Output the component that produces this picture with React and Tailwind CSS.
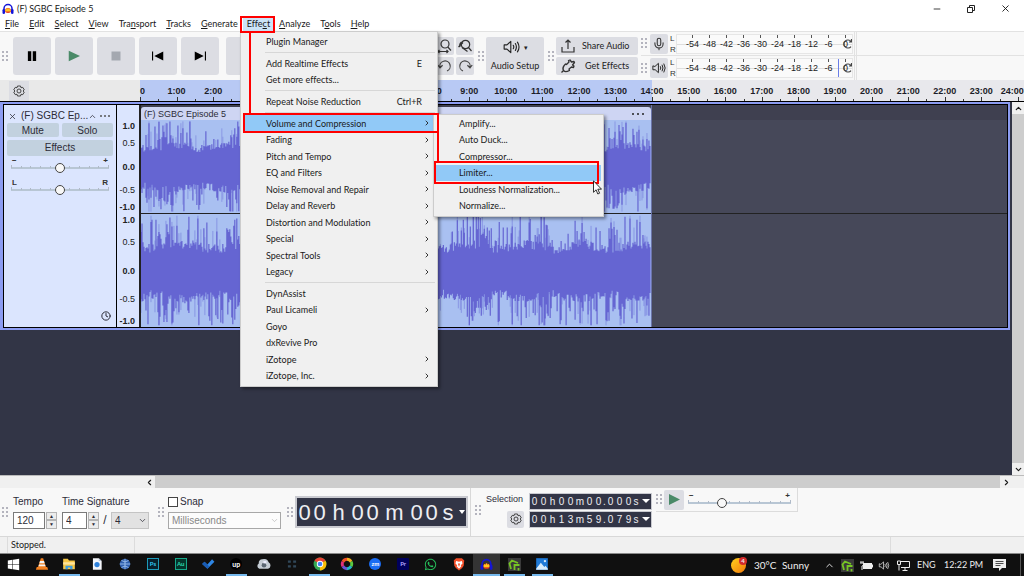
import React from 'react'
import clsx from 'clsx'
import { FaWhatsapp, FaWindows } from 'react-icons/fa'
import { ChevronDown, ChevronLeft, ChevronRight, ChevronUp, Clock, Mic, Minus, X } from 'lucide-react'

const menuItems = [
  ['', 'F', 'ile'],
  ['', 'E', 'dit'],
  ['', 'S', 'elect'],
  ['', 'V', 'iew'],
  ['Tra', 'n', 'sport'],
  ['', 'T', 'racks'],
  ['', 'G', 'enerate'],
  ['Effe', 'c', 't'],
  ['', 'A', 'nalyze'],
  ['T', 'o', 'ols'],
  ['', 'H', 'elp']
]

const effectGroups = [
  { size: 'h-[17px]', items: [{ label: 'Plugin Manager' }] },
  { size: 'h-[33px]', items: [{ label: 'Add Realtime Effects', keys: 'E' }, { label: 'Get more effects...' }] },
  { size: 'h-[17px]', items: [{ label: 'Repeat Noise Reduction', keys: 'Ctrl+R' }] },
  {
    size: 'h-[165px]',
    items: [
      { label: 'Volume and Compression', sub: true, active: true },
      { label: 'Fading', sub: true },
      { label: 'Pitch and Tempo', sub: true },
      { label: 'EQ and Filters', sub: true },
      { label: 'Noise Removal and Repair', sub: true },
      { label: 'Delay and Reverb', sub: true },
      { label: 'Distortion and Modulation', sub: true },
      { label: 'Special', sub: true },
      { label: 'Spectral Tools', sub: true },
      { label: 'Legacy', sub: true }
    ]
  },
  {
    size: 'h-[99px]',
    items: [
      { label: 'DynAssist' },
      { label: 'Paul Licameli', sub: true },
      { label: 'Goyo' },
      { label: 'dxRevive Pro' },
      { label: 'iZotope', sub: true },
      { label: 'iZotope, Inc.', sub: true }
    ]
  }
]

const volumeItems = ['Amplify...', 'Auto Duck...', 'Compressor...', 'Limiter...', 'Loudness Normalization...', 'Normalize...']

const meterMarks = ['-54', '-48', '-42', '-36', '-30', '-24', '-18', '-12', '-6', '0']

const Grip = () => (
  <svg className="h-[11px] w-[6px] shrink-0" viewBox="0 0 6 11" fill="#b4b4be">
    {[0, 4, 8].map((y) => (
      <g key={y}>
        <rect x="0" y={y} width="2" height="2" />
        <rect x="4" y={y} width="2" height="2" />
      </g>
    ))}
  </svg>
)

const AudacityLogo = ({ className }) => (
  <svg className={className} viewBox="0 0 24 24">
    <path d="M4 15V11a8 8 0 0 1 16 0v4" fill="none" stroke="#1414d8" strokeWidth="3" />
    <ellipse cx="12" cy="15" rx="6" ry="5" fill="#e8381c" />
    <path d="M6 15l2-4 2 2 2-4 2 4 2-2 2 4-2 2H8z" fill="#ffc81e" />
    <rect x="1" y="12" width="5" height="10" rx="2.500" fill="#1414d8" />
    <rect x="18" y="12" width="5" height="10" rx="2.500" fill="#1414d8" />
  </svg>
)

const GearIcon = () => (
  <svg className="size-3" viewBox="0 0 24 24" fill="none" stroke="#333" strokeWidth="1.800" strokeLinejoin="round">
    <path d="M9 2h6l1 3.500 3.500-.8 3 5L20 12l2.500 2.300-3 5-3.500-.8-1 3.500H9l-1-3.500-3.500.8-3-5L4 12 1.500 9.700l3-5 3.500.8z" />
    <circle cx="12" cy="12" r="4" />
  </svg>
)

const SpeakerIcon = ({ className }) => (
  <svg className={className} viewBox="0 0 24 20" fill="none" stroke="currentColor" strokeWidth="1.600" strokeLinejoin="round" strokeLinecap="round">
    <path d="M1.500 7v6h4l5.500 5V2L5.500 7z" />
    <path d="M14.500 7.500q1.500 2.500 0 5M17.500 5q3 5 0 10M20.500 3q4.500 7 0 14" />
  </svg>
)

const SearchGlyph = ({ variant }) => (
  <svg className="size-4" viewBox="0 0 16 16" fill="none" stroke="#333" strokeWidth="1.200">
    {variant === 'fit'
      ? (
      <>
        <circle cx="8" cy="6" r="4" />
        <path d="M10.800 9L14 12.500M1 13.500h10M2.500 12L1 13.500 2.500 15M9.500 12l1.500 1.500L9.500 15" />
      </>
        )
      : (
      <>
        <circle cx="8.500" cy="6.500" r="4.200" />
        <path d="M11.500 9.500l3 3.500M1.500 9L6 4.500M5 9.500L10.500 13.500M4.500 4A4.500 4.500 0 0 0 3 9" />
      </>
        )}
  </svg>
)

const ArrowGlyph = ({ flip }) => (
  <svg className={clsx('size-4', flip && '-scale-x-100')} viewBox="0 0 16 16" fill="none" stroke="#444" strokeWidth="1.200">
    <path d="M3 9.500A5.200 5.200 0 1 1 10 13M.8 7L3 9.800 5.600 7.300" />
  </svg>
)

const transport = [
  { name: 'Pause', icon: <path d="M6.500 5.500H11v13H6.500zM13 5.500h4.500v13H13z" fill="#000" /> },
  { name: 'Play', icon: <path d="M5 5l15 7-15 7z" fill="#4a8a68" /> },
  { name: 'Stop', icon: <path d="M6 6h12v12H6z" fill="#a4a8b0" /> },
  { name: 'Skip to start', icon: <path d="M4 6h1.500v12H4zM19 6v12L7 12z" fill="#000" /> },
  { name: 'Skip to end', icon: <path d="M18.500 6H20v12h-1.500zM5 6v12l12-6z" fill="#000" /> }
]

const IconButton = ({ label, children }) => (
  <button aria-label={label} className="flex size-[18px] items-center justify-center rounded-[2px] bg-[#dcdde3]">
    {children}
  </button>
)

const Meter = ({ label, playback, children }) => (
  <div className="flex h-6 items-center">
    <Grip />
    <button aria-label={label} className="ml-[3px] flex h-5 w-[18px] items-center justify-center rounded-[2px] bg-[#dcdde3]">
      {children}
    </button>
    <div className="ml-[2px] flex w-[6px] flex-col font-['Liberation_Sans',sans-serif] text-[8px] leading-[11px] text-[#333]">
      <span>L</span>
      <span>R</span>
    </div>
    <div className="relative flex h-5 w-[177px] border border-[#e6e6e6] bg-[#fafafa] pl-[7px] font-['Liberation_Sans',sans-serif] text-[9px] leading-3 text-[#222]">
      {meterMarks.map((mark) => (
        <div key={mark} className="flex w-[17px] shrink-0 flex-col items-center">
          <span className="h-[3px] w-px bg-[#555]" />
          <span>{mark}</span>
        </div>
      ))}
      <span className="absolute top-[9px] left-0 h-px w-full bg-[#0000001c]" />
      <svg className="absolute top-1 right-0 size-[10px]" viewBox="0 0 10 10" fill="none" stroke="#444" strokeWidth="1.200">
        <path d="M9 2.500A4 4 0 1 0 9 7.500M9.500 0v3H7" />
      </svg>
      {playback && <span className="absolute top-0 left-[161px] h-full w-px bg-[#6a7ee8]" />}
    </div>
    <span className="ml-px h-full w-[3px] border-x border-[#e2e2e2]" />
  </div>
)

const Toolbar = () => (
  <div className="flex h-[49px] shrink-0 border-t border-[#e2e2e2] bg-[#f8f8f8]">
    <div className="flex items-center pl-[2px]">
      <Grip />
      <div className="ml-[5px] flex gap-1">
        {transport.map(({ name, icon }) => (
          <button key={name} aria-label={name} className="flex size-[38px] items-center justify-center rounded-[3px] bg-[#dcdde3]">
            <svg className="size-[18px]" viewBox="0 0 24 24">{icon}</svg>
          </button>
        ))}
      </div>
      <div className="ml-[7px] flex gap-1">
        <button aria-label="Record" className="flex size-[38px] items-center justify-center rounded-[3px] bg-[#dcdde3]">
          <span className="size-2 rounded-full bg-[#c0392b]" />
        </button>
        <button aria-label="Loop" className="size-[38px] rounded-[3px] bg-[#dcdde3]" />
      </div>
      <div className="ml-[130px] grid grid-cols-2 gap-[2px]">
        <IconButton label="Fit selection to width"><SearchGlyph variant="fit" /></IconButton>
        <IconButton label="Zoom toggle"><SearchGlyph /></IconButton>
        <IconButton label="Undo"><ArrowGlyph /></IconButton>
        <IconButton label="Redo"><ArrowGlyph flip /></IconButton>
      </div>
      <div className="ml-1"><Grip /></div>
      <button className="ml-[2px] flex h-[38px] w-[58px] flex-col items-center justify-around rounded-[2px] bg-[#dcdde3] text-[9px] leading-3 text-[#222]">
        <span className="flex items-center gap-1">
          <SpeakerIcon className="h-[14px] w-[17px]" />
          <span className="text-[7px]">▾</span>
        </span>
        Audio Setup
      </button>
      <div className="ml-1"><Grip /></div>
      <div className="ml-[2px] flex w-[82px] flex-col gap-[2px] text-[9px] text-[#222]">
        <button className="flex h-[18px] items-center gap-[6px] rounded-[2px] bg-[#dcdde3] pl-1">
          <svg className="size-4" viewBox="0 0 16 16" fill="none" stroke="#333" strokeWidth="1.200">
            <path d="M2 9v5h12V9M8 11V2M5.500 4.500L8 2l2.500 2.500" />
          </svg>
          Share Audio
        </button>
        <button className="flex h-[18px] items-center gap-[6px] rounded-[2px] bg-[#dcdde3] pl-1">
          <svg className="size-4" viewBox="0 0 16 16" fill="none" stroke="#333" strokeWidth="1.300" strokeLinejoin="round">
            <path d="M1.500 14.500l2-2M4 13c-2-2-.5-5 1.500-7l1 .5L9 4l-.5-1.500L10 2l1.500 2L14 3.500l.5 1L12.500 7l1.500 1-.5 1.500-2-.5L9 11l.5 1.500C7.500 13.500 5.500 14.500 4 13z" />
          </svg>
          <span className="pl-[3px]">Get Effects</span>
        </button>
      </div>
    </div>
    <div className="ml-[3px] flex flex-1 flex-col divide-y divide-[#e2e2e2]">
      <Meter label="Record meter">
        <Mic className="size-[14px] text-[#333]" strokeWidth={1.8} />
      </Meter>
      <Meter label="Playback meter" playback>
        <SpeakerIcon className="h-3 w-[14px]" />
      </Meter>
    </div>
  </div>
)

const Timeline = () => (
  <div className="flex h-[22px] shrink-0 border-b border-black bg-[#e8e8ec]">
    <div className="flex w-[140px] items-center bg-[#e9e9e9] pl-[9px]">
      <button aria-label="Timeline options" className="flex h-5 w-5 items-center justify-center bg-[#dcdde3]">
        <GearIcon />
      </button>
    </div>
    <div className="flex flex-1 font-['Liberation_Sans',sans-serif] text-[9px] leading-[12px] font-bold text-[#1c1c28]">
      {Array.from({ length: 24 }, (_, i) => (
        <div key={i} className={clsx('flex w-0 flex-1 flex-col items-start justify-between', i < 14 && 'bg-[#b8c9f4]')}>
          <span className={clsx('mt-[5px]', i > 0 && '-translate-x-1/2')}>{i === 0 ? '0' : `${i}:00`}</span>
          <span className="flex w-full items-end">
            <span className="h-1 w-1/2 border-l border-[#333]" />
            <span className="h-[2px] w-1/2 border-l border-[#333]" />
          </span>
        </div>
      ))}
      <div className="flex w-[6px] flex-col items-end justify-between">
        <span className="mt-[5px]">24:00</span>
        <span className="h-1 w-full border-l border-[#333]" />
      </div>
    </div>
  </div>
)

// Small seeded generator so both channels always draw the same
const makeRandom = (seed) => () => {
  seed = (seed * 1103515245 + 12345) % 2147483648
  return seed / 2147483648
}

const isLoud = (x) => (x > 16 && x < 34) || (x > 85 && x < 100) || (x > 328 && x < 352) || (x > 398 && x < 414) || (x > 468 && x < 486)

const buildWave = (seed, width) => {
  const random = makeRandom(seed)
  const side = (x, floor) => {
    const body = floor + Math.sin(x / 9 + seed) * 0.04 + random() * 0.16
    const reach = random() < (isLoud(x) ? 0.65 : 0.2) ? 0.1 + random() * 0.45 : 0
    return Math.min(0.97, body + reach)
  }
  let core = ''
  let peaks = ''
  for (let x = 0; x < width; x += 1) {
    const up = side(x, 0.34)
    const down = side(x, 0.38)
    core += `M${x} ${Math.round(100 - up * 100)}V${Math.round(100 + down * 100)}`
    if (random() < 0.25) {
      const high = Math.min(0.97, up + random() * 0.35)
      const low = Math.min(0.97, down + random() * 0.35)
      peaks += `M${x} ${Math.round(100 - high * 100)}V${Math.round(100 + low * 100)}`
    }
  }
  return { core, peaks }
}

const Waveform = ({ seed }) => {
  const { core, peaks } = buildWave(seed, 511)
  return (
    <svg className="h-full w-full bg-[#a9c0f1]" viewBox="0 0 511 200" preserveAspectRatio="none" fill="none">
      <path d={peaks} stroke="#7f8ae0" />
      <path d={core} stroke="#6565d2" strokeWidth="1.200" />
    </svg>
  )
}

const Slider = ({ label, left, right, value, wide }) => (
  <div className={clsx('relative font-["Liberation_Sans",sans-serif] text-[8px] leading-[8px] font-bold text-[#333]', wide ? 'w-[103px]' : 'w-[98px]')}>
    <div className="flex justify-between px-px">
      <span>{left}</span>
      <span>{right}</span>
    </div>
    <div className="flex h-[3px] justify-between">
      {Array.from({ length: 11 }, (_, i) => <span key={i} className={clsx('w-px bg-[#b0bac8]', i % 10 ? 'mt-px' : '')} />)}
    </div>
    <input
      type="range"
      aria-label={label}
      defaultValue={value}
      className="-mt-[5px] block h-[10px] w-full appearance-none bg-[linear-gradient(#b8c6d4,#b8c6d4)] bg-[length:100%_2px] bg-center bg-no-repeat [&::-webkit-slider-thumb]:size-[10px] [&::-webkit-slider-thumb]:appearance-none [&::-webkit-slider-thumb]:rounded-full [&::-webkit-slider-thumb]:border [&::-webkit-slider-thumb]:border-[#444] [&::-webkit-slider-thumb]:bg-[#f8f8f8]"
    />
  </div>
)

const TrackPanel = () => (
  <div className="flex w-[113px] flex-col border-r border-black bg-[#dbe5fe] px-[3px] pt-1 font-['Liberation_Sans',sans-serif] text-[10px] text-[#2c2c38]">
    <div className="flex h-[14px] items-center">
      <button aria-label="Close track" className="px-px"><X className="size-[9px]" strokeWidth={2} /></button>
      <span className="ml-[3px] flex-1 leading-3 whitespace-nowrap">(F) SGBC Ep...</span>
      <button aria-label="Collapse track"><ChevronUp className="size-[9px]" /></button>
      <button aria-label="Track menu" className="mx-[3px] flex gap-[2px]">
        <span className="size-[2px] rounded-full bg-[#555]" />
        <span className="size-[2px] rounded-full bg-[#555]" />
        <span className="size-[2px] rounded-full bg-[#555]" />
      </button>
    </div>
    <div className="grid grid-cols-2 gap-[3px]">
      <button className="h-[14px] rounded-[2px] bg-[#c2d1df] leading-[15px]">Mute</button>
      <button className="h-[14px] rounded-[2px] bg-[#c2d1df] leading-[15px]">Solo</button>
      <button className="col-span-2 h-4 rounded-[2px] bg-[#c2d1df] leading-4">Effects</button>
    </div>
    <div className="mt-px flex flex-col items-center gap-[6px]">
      <Slider label="Volume" left="−" right="+" value={50} />
      <Slider label="Pan" left="L" right="R" value={50} />
    </div>
    <Clock className="mt-auto mr-[2px] mb-[6px] size-[10px] self-end" strokeWidth={2.4} />
  </div>
)

const AmplitudeScale = ({ className }) => (
  <div className={clsx('grid items-center pr-[4px] text-right', className)}>
    {['1.0', '0.5', '0.0', '-0.5', '-1.0'].map((mark, i) => (
      <span key={mark} className={i % 2 ? '' : 'font-bold'}>{mark}</span>
    ))}
  </div>
)

const Track = () => (
  <div className="flex h-[228px] border-2 border-l-[3px] border-[#8c9cf2] bg-black p-px">
    <TrackPanel />
    <div className="flex w-[24px] flex-col border-r-2 border-[#222] bg-[#dbe5fe] pt-[15px] font-['Liberation_Sans',sans-serif] text-[9px] leading-3 text-[#222]">
      <AmplitudeScale className="h-[94px] grid-rows-[12fr_22fr_26fr_20fr_14fr]" />
      <AmplitudeScale className="flex-1 grid-rows-[12fr_32fr_26fr_30fr_13fr]" />
    </div>
    <div className="flex flex-1 bg-[#464859]">
      <div className="flex w-[59%] flex-col border-r border-[#6b74a8] bg-[#3f4050]">
        <div className="mt-[2px] flex h-[13px] items-center justify-between rounded-t-[3px] bg-[#ced5f3] pr-[7px] pl-[3px] font-['Liberation_Sans',sans-serif] text-[9px] leading-3 text-[#2c2c38]">
          <span>(F) SGBC Episode 5</span>
          <span className="flex gap-[3px]">
            <span className="size-[2px] rounded-full bg-[#222]" />
            <span className="size-[2px] rounded-full bg-[#222]" />
            <span className="size-[2px] rounded-full bg-[#222]" />
          </span>
        </div>
        <div className="h-[94px] border-b border-[#222]"><Waveform seed={42} /></div>
        <div className="h-0 flex-1"><Waveform seed={97} /></div>
      </div>
      <div className="flex flex-1 flex-col">
        <div className="h-[15px] bg-[#3f4050]" />
        <div className="h-[94px] border-b border-[#222]" />
      </div>
    </div>
  </div>
)

const Spinner = ({ label, value, className }) => (
  <div className="flex gap-px">
    <input aria-label={label} defaultValue={value} className={clsx('h-[17px] border border-[#7a7a7a] bg-white pl-[3px]', className)} />
    <div className="flex w-[11px] flex-col">
      <button aria-label={`${label} up`} className="flex-1 border border-[#b4b4b4] bg-[#ececec] text-[5px] leading-[6px]">▲</button>
      <button aria-label={`${label} down`} className="flex-1 border border-[#b4b4b4] bg-[#ececec] text-[5px] leading-[6px]">▼</button>
    </div>
  </div>
)

const largeWidths = { h: 'w-[23px]', m: 'w-[29px]', s: 'w-[18px]' }
const smallWidths = { h: 'w-[9px]', m: 'w-[10px]', s: 'w-[6px]', '.': 'w-[3px]' }

const digitWidth = (char, large) => {
  if (large) return largeWidths[char] || 'w-[15px]'
  return smallWidths[char] || 'w-[9px]'
}

const TimeField = ({ label, value, large }) => (
  <div
    role="group"
    aria-label={label}
    className={clsx(
      "flex items-center border-[#c9cad0] bg-[#323546] font-['Liberation_Sans',sans-serif] text-[#eeeef2]",
      large ? 'h-8 w-[173px] border-2 text-[22px]' : 'h-[17px] w-[123px] border text-[10px]'
    )}
  >
    {value.split('').map((char, i) => (
      <span key={i} className={clsx('flex shrink-0 justify-center', digitWidth(char, large))}>{char}</span>
    ))}
    <button aria-label={`${label} format`} className="ml-auto pr-px">
      <svg className={large ? 'h-[4px] w-[6px]' : 'h-[4px] w-[8px]'} viewBox="0 0 8 4" preserveAspectRatio="none" fill="#fff"><path d="M0 0h8L4 4z" /></svg>
    </button>
  </div>
)

const BottomBar = () => (
  <div className="flex h-[49px] shrink-0 border-b border-[#d8d8d8] bg-[#f8f8f8] font-['Liberation_Sans',sans-serif] text-[10px] text-[#2c2c38]">
    <div className="flex items-center pl-[2px]">
      <Grip />
      <div className="ml-[5px] flex w-[49px] flex-col gap-1">
        <span className="leading-3">Tempo</span>
        <Spinner label="Tempo" value="120" className="w-8" />
      </div>
      <div className="flex w-[96px] flex-col gap-1">
        <span className="leading-3">Time Signature</span>
        <div className="flex h-[17px] items-center">
          <Spinner label="Beats" value="4" className="w-[25px]" />
          <span className="w-3 text-center text-[12px]">/</span>
          <div className="relative flex">
            <select aria-label="Beat unit" className="h-[17px] w-[38px] appearance-none border border-[#c4c4c4] bg-[#e2e2e2] pl-[3px]">
              <option>4</option>
            </select>
            <ChevronDown className="pointer-events-none absolute top-1 right-[2px] size-[9px]" />
          </div>
        </div>
      </div>
      <Grip />
      <div className="ml-[4px] flex w-[119px] flex-col gap-1">
        <label className="flex items-center gap-[2px] leading-3">
          <input type="checkbox" className="size-[10px] appearance-none border border-[#444] bg-white" />
          Snap
        </label>
        <div className="relative flex w-[113px]">
          <select aria-label="Snap unit" className="h-[17px] w-full appearance-none border border-[#a8a8a8] bg-[#fcfcfc] pl-[3px] text-[#888]">
            <option>Milliseconds</option>
          </select>
          <ChevronDown className="pointer-events-none absolute top-1 right-[2px] size-[9px] text-[#bbb]" />
        </div>
      </div>
      <Grip />
      <div className="ml-[2px]">
        <TimeField label="Time" value="00h00m00s" large />
      </div>
    </div>
    <div className="ml-[2px] flex items-center border-l border-[#d8d8d8] pb-1 pl-[4px]">
      <Grip />
      <div className="ml-[5px] flex flex-col items-end gap-[6px]">
        <span className="w-[38px] text-[9px] leading-3">Selection</span>
        <button aria-label="Selection options" className="flex size-[17px] items-center justify-center rounded-[2px] bg-[#dcdde3]">
          <GearIcon />
        </button>
      </div>
      <div className="ml-[5px] flex flex-col gap-px">
        <TimeField label="Selection start" value="00h00m00.000s" />
        <TimeField label="Selection end" value="00h13m59.079s" />
      </div>
    </div>
    <div className="ml-1 flex h-6 w-[142px] items-center border-r border-b border-[#dcdcdc]">
      <Grip />
      <button aria-label="Play at speed" className="ml-[2px] flex size-5 items-center justify-center rounded-[2px] bg-[#dcdde3]">
        <svg className="size-[13px]" viewBox="0 0 13 13"><path d="M1 1l11 5.500L1 12z" fill="#4a8a68" /></svg>
      </button>
      <div className="ml-1">
        <Slider label="Playback speed" left="−" right="+" value={31} wide />
      </div>
    </div>
  </div>
)

const AppTile = ({ className, children }) => (
  <span className={clsx('flex size-3 items-center justify-center text-[6px] leading-none font-bold', className)}>{children}</span>
)

const Camtasia = () => (
  <svg className="size-[13px] bg-[#3a3a3a]" viewBox="0 0 13 13" fill="none" stroke="#76c623" strokeWidth="1.800">
    <path d="M10 5L4 2.500 1.500 5.500 3 11M11.500 7H6.500v5M10.500 10v2.500" />
  </svg>
)

const Draw = ({ children }) => <svg className="size-[14px]" viewBox="0 0 24 24">{children}</svg>

const taskbarApps = [
  { name: 'Start', icon: <FaWindows className="size-[13px] text-white" /> },
  {
    name: 'VLC',
    icon: (
      <Draw>
        <path d="M10 2h4l5 16H5z" fill="#f58220" />
        <path d="M8.500 7h7l1 3.500h-9zM6.800 13h10.400l.8 3H6z" fill="#f4f4f4" />
        <path d="M3 17h18l1.500 5h-21z" fill="#f58220" />
      </Draw>
    )
  },
  {
    name: 'File Explorer',
    open: true,
    icon: (
      <Draw>
        <path d="M2 3h8l2 3h10v15H2z" fill="#f6c644" />
        <path d="M2 9h20v4H2z" fill="#ffe49a" />
        <path d="M6 21v-6h12v6h-4v-3h-4v3z" fill="#3b9be0" />
      </Draw>
    )
  },
  {
    name: 'Document',
    icon: (
      <Draw>
        <path d="M5 2h10l5 5v15H5z" fill="#f4f6fa" />
        <path d="M15 2v5h5z" fill="#b8c4d4" />
        <circle cx="12" cy="13" r="4.500" fill="#2f82dc" />
      </Draw>
    )
  },
  {
    name: 'Browser',
    icon: (
      <Draw>
        <circle cx="12" cy="12" r="9" fill="#2f5fae" />
        <path d="M12 3v18M3 12h18M6 6q6 5 12 0M6 18q6-5 12 0" fill="none" stroke="#9fc2f0" strokeWidth="1.500" />
      </Draw>
    )
  },
  { name: 'Photoshop', icon: <AppTile className="border border-[#1d9ab8] bg-[#06202c] text-[#31c5f0]">Ps</AppTile> },
  { name: 'Audition', icon: <AppTile className="border border-[#17a88a] bg-[#04352c] text-[#2fd9b0]">Au</AppTile> },
  { name: 'To Do', icon: <Draw><path d="M2 12l4-4 5 5L19 4l4 4-12 12z" fill="#2f86e4" /><path d="M2 12l4-4 8 8-3 4z" fill="#1a5cb4" /></Draw> },
  { name: 'Upwork', open: true, icon: <AppTile className="rounded-full bg-black text-[7px] text-white">up</AppTile> },
  {
    name: 'Cloud',
    icon: (
      <Draw>
        <path d="M4 20a5 5 0 0 1-1-9A6 6 0 0 1 9 4a8 8 0 0 1 11 5 6 6 0 0 1-1 11z" fill="#c4ccd4" />
        <circle cx="12" cy="14" r="4" fill="#5a6672" />
        <path d="M11 7h5v4h-5z" fill="#eef" />
      </Draw>
    )
  },
  { name: 'Grid', icon: <Draw><path d="M5 6h5v4H5zM14 6h5v4h-5zM5 14h5v4H5zM14 14h5v4h-5z" fill="#31485a" /></Draw> },
  {
    name: 'Chrome',
    open: true,
    icon: (
      <Draw>
        <circle cx="12" cy="12" r="11" fill="#34a853" />
        <path d="M12 12L2.500 6.500A11 11 0 0 1 21.500 6.500z" fill="#ea4335" />
        <path d="M12 12l9.500-5.500A11 11 0 0 1 12 23z" fill="#fbbc05" />
        <circle cx="12" cy="12" r="5.500" fill="#fff" />
        <circle cx="12" cy="12" r="4" fill="#4285f4" />
      </Draw>
    )
  },
  {
    name: 'Color wheel',
    icon: (
      <Draw>
        <g fill="none" strokeWidth="5">
          <path d="M12 4a8 8 0 0 1 7 4" stroke="#f0b020" />
          <path d="M19 8a8 8 0 0 1 0 8" stroke="#5cc840" />
          <path d="M19 16a8 8 0 0 1-7 4" stroke="#20b8c8" />
          <path d="M12 20a8 8 0 0 1-7-4" stroke="#6a54d8" />
          <path d="M5 16a8 8 0 0 1 0-8" stroke="#e0307a" />
          <path d="M5 8a8 8 0 0 1 7-4" stroke="#f05028" />
        </g>
      </Draw>
    )
  },
  { name: 'Zoom', icon: <AppTile className="rounded-full bg-[#1a6cf4] text-white">zm</AppTile> },
  { name: 'Premiere', icon: <AppTile className="rounded-[1px] bg-[#00005b] text-[#b0a4ff]">Pr</AppTile> },
  { name: 'WhatsApp', icon: <FaWhatsapp className="size-[13px] text-[#26c05c]" /> },
  {
    name: 'Brave',
    icon: (
      <Draw>
        <path d="M7 2h10l4 4-1 9q-2 5-8 8-6-3-8-8L3 6z" fill="#f4502a" />
        <path d="M7 7l5 1 5-1 1 4-3 3 1 2-4 4-4-4 1-2-3-3z" fill="#fff" />
        <path d="M10 11l2 6 2-6z" fill="#f4502a" />
      </Draw>
    )
  },
  { name: 'Audacity', open: true, current: true, icon: <AudacityLogo className="size-[13px]" /> },
  { name: 'Camtasia', open: true, icon: <Camtasia /> },
  {
    name: 'Photos',
    open: true,
    icon: (
      <Draw>
        <path d="M2 2h20v20H2z" fill="#1f7ad8" />
        <path d="M2 20l8-10 6 7 2-2 4 5v2H2z" fill="#d8ecfc" />
        <circle cx="17" cy="7" r="2" fill="#d8ecfc" />
      </Draw>
    )
  }
]

const Taskbar = () => (
  <footer className="flex h-[22px] shrink-0 items-center bg-[#101010] text-[10px] text-[#eee]">
    <div className="grid h-full w-[556px] grid-cols-20">
      {taskbarApps.map(({ name, icon, open, current }) => (
        <button key={name} aria-label={name} className={clsx('flex flex-col items-center', current && 'bg-[#343434]')}>
          <span className="flex flex-1 items-center">{icon}</span>
          <span className={clsx('h-[2px]', current ? 'w-full' : 'w-[21px]', open && 'bg-[#76b9ed]')} />
        </button>
      ))}
    </div>
    <div className="ml-auto flex h-full items-center pr-[3px]">
      <div className="relative size-[15px] rounded-full bg-linear-to-br from-[#ffd21e] to-[#f0780a]">
        <span className="absolute -top-px -right-px flex size-2 items-center justify-center rounded-full bg-[#d22b2b] text-[6px] font-bold">4</span>
      </div>
      <span className="ml-2 w-7">30°C</span>
      <span className="w-[42px]">Sunny</span>
      <ChevronUp className="size-[11px]" />
      <span className="ml-[6px]"><Camtasia /></span>
      <svg className="ml-[6px] h-[9px] w-[13px]" viewBox="0 0 13 9">
        <path d="M3 2h9v1.500h1v3h-1V8H3z" fill="#eee" />
        <path d="M1 0v2M3 0v2M0 2h4v2L2 5v4" fill="none" stroke="#eee" />
      </svg>
      <SpeakerIcon className="ml-[5px] h-[9px] w-3" />
      <svg className="ml-[7px] h-[11px] w-[13px]" viewBox="0 0 13 11" fill="none" stroke="#eee">
        <path d="M4 1.500h8.500v6H4M8 7.500v2.500M5.500 10.500h5M.5 1h3v3.500h-3zM2 4.500v6" />
      </svg>
      <span className="ml-[7px] w-[27px] text-[9px]">ENG</span>
      <span className="w-[49px] text-[9px] whitespace-nowrap">12:22 PM</span>
      <svg className="mr-[14px] h-3 w-[13px]" viewBox="0 0 13 12">
        <path d="M0 0h13v9H9l-3 3V9H0z" fill="#eee" />
        <path d="M2.500 2.500h8M2.500 4.500h8M2.500 6.500h5" stroke="#222" strokeWidth=".8" />
      </svg>
      <span className="h-full w-px bg-[#555]" />
    </div>
  </footer>
)

const EffectMenu = () => (
  <div className="absolute top-[31px] left-60 w-[198px] border border-[#ccc] bg-[#f0f0f0] px-[2px] pt-px pb-[2px] shadow-[2px_2px_3px_rgba(0,0,0,0.4)]">
    {effectGroups.map((group, i) => (
      <div key={group.items[0].label} className={clsx('grid auto-rows-fr', group.size, i > 0 && 'mt-[5px]', i > 0 && 'relative')}>
        {i > 0 && <hr className="absolute -top-[3px] right-0 left-[22px] border-[#d7d7d7]" />}
        {group.items.map(({ label, keys, sub, active }) => (
          <button key={label} className={clsx('flex items-center pr-1 pl-[23px] text-left whitespace-nowrap', active && 'bg-[#91c9f7]')}>
            <span className="flex-1">{label}</span>
            {keys && <span className="pr-[9px]">{keys}</span>}
            {sub && <ChevronRight className="size-2" strokeWidth={2.6} />}
          </button>
        ))}
      </div>
    ))}
  </div>
)

const VolumeMenu = () => (
  <div className="absolute top-[114px] left-[433px] w-[171px] border border-[#ccc] bg-[#f0f0f0] px-[2px] pb-[2px] shadow-[2px_2px_3px_rgba(0,0,0,0.4)]">
    <div className="grid h-[99px] auto-rows-fr">
      {volumeItems.map((label) => (
        <button key={label} className={clsx('pl-[23px] text-left whitespace-nowrap', label === 'Limiter...' && 'bg-[#91c9f7]')}>
          {label}
        </button>
      ))}
    </div>
  </div>
)

export default function App () {
  return (
    <div className="relative flex min-h-screen flex-col overflow-hidden bg-white font-['Lato','Open_Sans',sans-serif] text-[9px] text-[#1a1a1a] [font-variant-ligatures:none]">
      <header className="flex h-[17px] shrink-0 items-center pl-[2px]">
        <AudacityLogo className="size-3" />
        <h1 className="ml-[3px] flex-1">(F) SGBC Episode 5</h1>
        <button aria-label="Minimize" className="w-[34px]"><Minus className="mx-auto size-[10px]" strokeWidth={2} /></button>
        <button aria-label="Restore" className="w-[34px]">
          <svg className="mx-auto size-2" viewBox="0 0 8 8" fill="none" stroke="#222">
            <path d="M.5 2.500h5v5h-5zM2.500 2.500v-2h5v5h-2" />
          </svg>
        </button>
        <button aria-label="Close" className="mr-[2px] w-[34px]"><X className="mx-auto size-[11px]" strokeWidth={2} /></button>
      </header>
      <nav className="flex h-[14px] shrink-0 items-center">
        {menuItems.map(([before, key, after]) => (
          <button key={before + key + after} className={clsx('leading-[14px]', key === 'c' ? 'bg-[#cce4f7] px-1' : 'px-[5px]')}>
            {before}<u>{key}</u>{after}
          </button>
        ))}
      </nav>
      <Toolbar />
      <Timeline />
      <main className="flex flex-1 bg-[#323546]">
        <div className="flex-1 pr-[2px]">
          <Track />
        </div>
        <div className="flex w-3 flex-col bg-[#cdcdcd]">
          <button aria-label="Scroll up" className="flex h-3 items-center justify-center bg-[#f0f0f0]"><ChevronUp className="size-[9px]" strokeWidth={3} /></button>
          <button aria-label="Scroll down" className="mt-auto flex h-3 items-center justify-center bg-[#f0f0f0]"><ChevronDown className="size-[9px]" strokeWidth={3} /></button>
        </div>
      </main>
      <div className="flex h-[13px] shrink-0 items-center border-t border-[#bbb] bg-[#f0f0f0] pr-3 pl-[143px]">
        <button aria-label="Scroll left" className="flex w-3 justify-center"><ChevronLeft className="size-[9px]" strokeWidth={3} /></button>
        <div className="h-full flex-1 bg-[#cdcdcd]" />
        <button aria-label="Scroll right" className="flex w-3 justify-center"><ChevronRight className="size-[9px]" strokeWidth={3} /></button>
      </div>
      <BottomBar />
      <div className="flex h-[17px] shrink-0 items-center border-b border-[#8a8a8a] bg-[#f0f0f0] pl-[7px]">
        <span className="flex h-full w-[128px] items-center border-x border-[#dcdcdc] pl-[3px]">Stopped.</span>
        <span className="h-full flex-1" />
        <span className="h-full w-[134px] border-l border-[#dcdcdc]" />
      </div>
      <Taskbar />

      <EffectMenu />
      <VolumeMenu />

      <div className="pointer-events-none absolute top-4 left-60 h-[17px] w-[35px] border-2 border-[#f00]" />
      <div className="pointer-events-none absolute top-[33px] left-[249px] h-[81px] w-[2px] bg-[#f00]" />
      <div className="pointer-events-none absolute top-[113px] left-[243px] h-5 w-[196px] border-2 border-[#f00]" />
      <div className="pointer-events-none absolute top-[132px] left-[437px] h-[30px] w-[2px] bg-[#f00]" />
      <div className="pointer-events-none absolute top-[161px] left-[434px] h-[23px] w-[165px] border-2 border-[#f00]" />
      <svg className="pointer-events-none absolute top-[180px] left-[593px] h-[15px] w-[9px]" viewBox="0 0 9 15" fill="#fff" stroke="#000" strokeWidth=".8">
        <path d="M.5.8v11.500l2.600-2.500 1.700 4.200 1.800-.8-1.800-4h3.700z" />
      </svg>
    </div>
  )
}
